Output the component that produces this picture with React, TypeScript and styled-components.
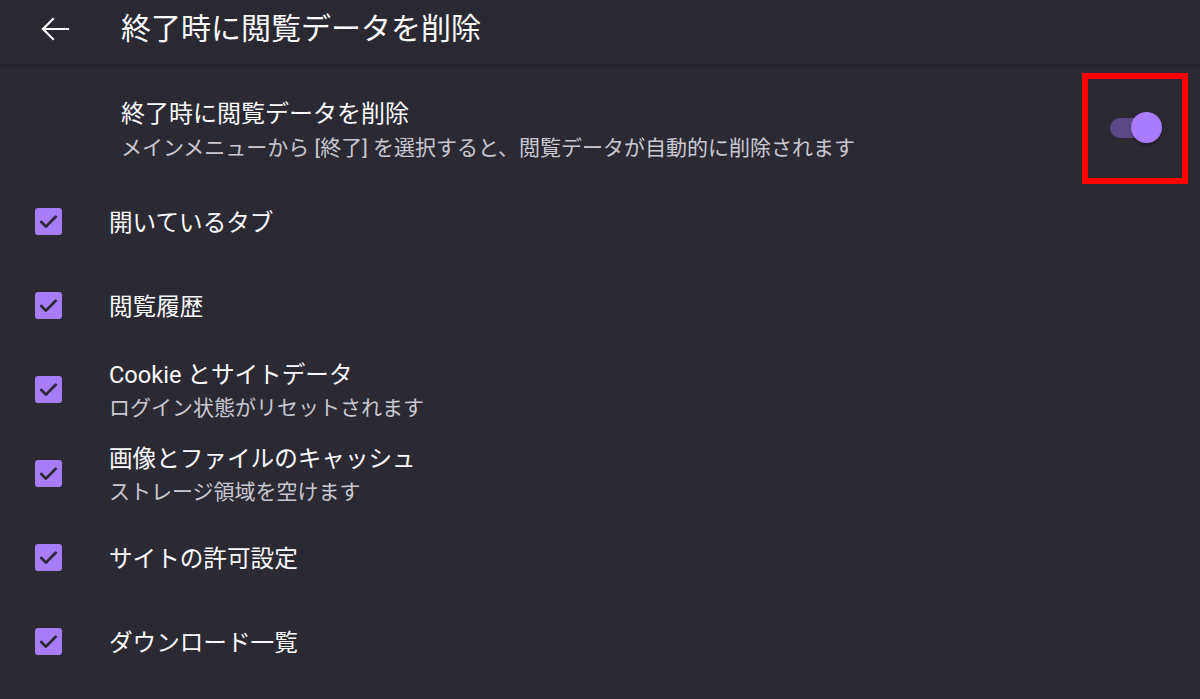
import React from "react";
import styled, { createGlobalStyle } from "styled-components";

const Global = createGlobalStyle`
  html, body { margin: 0; padding: 0; background: #2b2a33; }
  body {
    font-family: Roboto, "Noto Sans CJK JP", "Noto Sans", sans-serif;
    color: #fbfbfe;
  }
`;

const Page = styled.div`
  width: 1200px;
  height: 699px;
  background: #2b2a33;
  display: flex;
  flex-direction: column;
  overflow: hidden;
`;

const Header = styled.header`
  height: 64px;
  flex: none;
  display: flex;
  align-items: center;
  background: #2a2931;
  box-shadow: 0 2px 4px rgba(0, 0, 0, 0.25);
  position: relative;
  z-index: 1;
`;

const BackButton = styled.button`
  width: 108px;
  height: 64px;
  padding: 0 0 6px 40px;
  border: none;
  background: transparent;
  display: flex;
  align-items: center;
  color: #fbfbfe;
  cursor: pointer;
`;

const HeaderTitle = styled.h1`
  margin: 0 0 0 13px;
  font-size: 30px;
  font-weight: 400;
  line-height: 1;
  padding-bottom: 6px;
  color: #fbfbfe;
`;

const MainRow = styled.div`
  display: flex;
  align-items: center;
  margin-top: 9px;
  padding: 0 12px 0 121px;
`;

const MainText = styled.div`
  flex: 1;
  display: flex;
  flex-direction: column;
  padding-top: 5px;
`;

const Title = styled.div`
  font-size: 24px;
  line-height: 34px;
  color: #fbfbfe;
`;

const Subtitle = styled.div`
  font-size: 21px;
  line-height: 34px;
  color: #c9c8d0;
`;

const Highlight = styled.div`
  width: 106px;
  height: 111px;
  box-sizing: border-box;
  border: 6px solid #ff0000;
  display: flex;
  align-items: center;
  justify-content: center;
`;

const SwitchWrap = styled.div`
  position: relative;
  width: 52px;
  height: 31px;
  margin: 0 0 3px 2px;
`;

const Track = styled.div`
  position: absolute;
  left: 0;
  top: 6px;
  width: 38px;
  height: 20px;
  border-radius: 10px;
  background: #5a4986;
`;

const Knob = styled.div`
  position: absolute;
  right: 0;
  top: 0;
  width: 31px;
  height: 31px;
  border-radius: 50%;
  background: #a97cff;
  box-shadow: 0 2px 3px rgba(0, 0, 0, 0.35);
`;

const List = styled.div`
  display: flex;
  flex-direction: column;
  margin-top: -5px;
`;

const Row = styled.div`
  height: 84px;
  display: flex;
  align-items: center;
  padding-left: 35px;
`;

const Box = styled.div`
  width: 27px;
  height: 27px;
  border-radius: 3px;
  background: #a77cf8;
  display: flex;
  align-items: center;
  justify-content: center;
  flex: none;
`;

const RowText = styled.div`
  margin-left: 47px;
  display: flex;
  flex-direction: column;
  padding-top: 4px;
`;

const ItemSub = styled.div`
  font-size: 21px;
  line-height: 32px;
  color: #c9c8d0;
`;

const ItemTitle = styled.div`
  font-size: 23.6px;
  line-height: 34px;
  color: #fbfbfe;
`;

const Check = () => (
  <svg width="23" height="23" viewBox="0 0 24 24" fill="none">
    <path d="M4.5 12.5l4.8 4.8L19.5 7" stroke="#2b2a33" strokeWidth="2.8" strokeLinecap="round" strokeLinejoin="round" />
  </svg>
);

const items: { title: string; sub?: string }[] = [
  { title: "開いているタブ" },
  { title: "閲覧履歴" },
  { title: "Cookie とサイトデータ", sub: "ログイン状態がリセットされます" },
  { title: "画像とファイルのキャッシュ", sub: "ストレージ領域を空けます" },
  { title: "サイトの許可設定" },
  { title: "ダウンロード一覧" },
];

export default function App() {
  return (
    <Page>
      <Global />
      <Header>
        <BackButton aria-label="戻る">
          <svg width="30" height="24" viewBox="0 0 30 24" fill="none">
            <path d="M28 12H3M13 2L3 12l10 10" stroke="#fbfbfe" strokeWidth="2.2" strokeLinecap="square" />
          </svg>
        </BackButton>
        <HeaderTitle>終了時に閲覧データを削除</HeaderTitle>
      </Header>
      <MainRow>
        <MainText>
          <Title>終了時に閲覧データを削除</Title>
          <Subtitle>メインメニューから [終了] を選択すると、閲覧データが自動的に削除されます</Subtitle>
        </MainText>
        <Highlight>
          <SwitchWrap>
            <Track />
            <Knob />
          </SwitchWrap>
        </Highlight>
      </MainRow>
      <List>
        {items.map((it) => (
          <Row key={it.title}>
            <Box>
              <Check />
            </Box>
            <RowText>
              <ItemTitle>{it.title}</ItemTitle>
              {it.sub && <ItemSub>{it.sub}</ItemSub>}
            </RowText>
          </Row>
        ))}
      </List>
    </Page>
  );
}
